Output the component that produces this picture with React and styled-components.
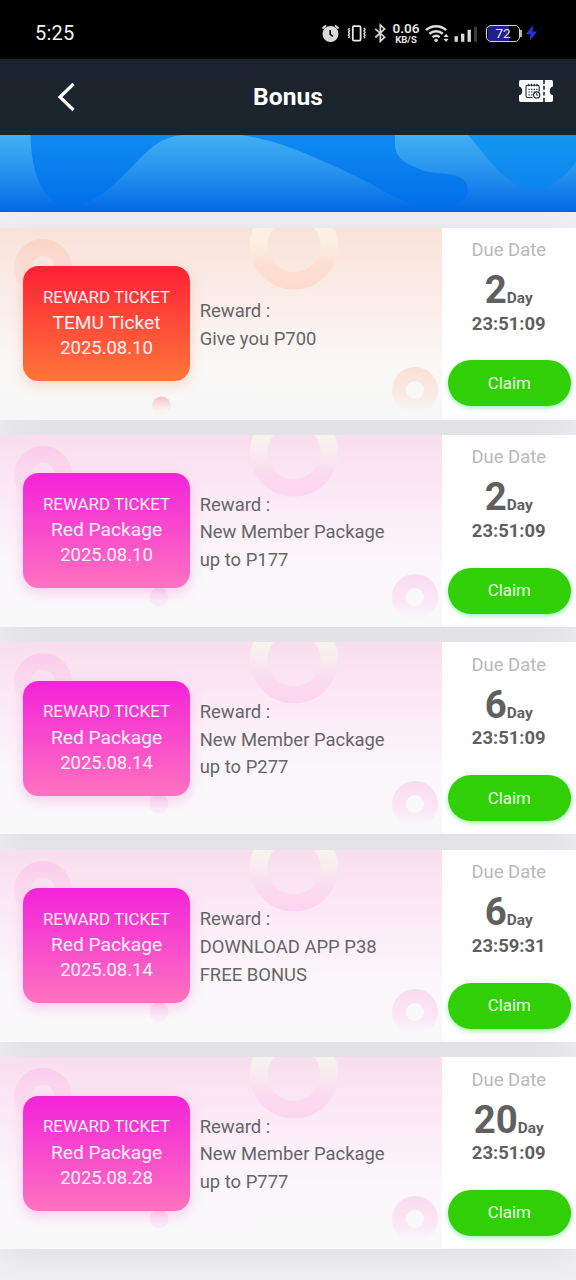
import styled, { createGlobalStyle } from 'styled-components';

const GlobalStyle = createGlobalStyle`
body {
    margin:0;
    background:#f0f0f4;
    font-family:Roboto, "Liberation Sans", sans-serif;
}
`
const Page = styled.div`
    width:576px;
    height:1280px;
    overflow:hidden;
    background:#f0f0f4;
`
const StatusBar = styled.div`
    height:59px;
    box-sizing:border-box;
    padding:7px 39px 0 35px;
    display:flex;
    align-items:center;
    justify-content:space-between;
    background:#000;
    color:#f2f2f2;
`
const Clock = styled.span`
    font-size:20px;
    letter-spacing:0.2px;
`
const StatusIcons = styled.div`
    display:flex;
    align-items:center;
`
const NetSpeed = styled.div`
    width:28px;
    margin:1px 5px 0 6px;
    display:flex;
    flex-direction:column;
    align-items:center;
    font-size:13.5px;
    line-height:13px;
    font-weight:600;
    color:#e6e6e6;
`
const NetUnit = styled.span`
    font-size:9.6px;
    line-height:10px;
    font-weight:700;
`
const Battery = styled.div`
    width:34px;
    height:17px;
    box-sizing:border-box;
    border:1.5px solid #d6d5c8;
    border-radius:5px;
    margin-left:9px;
    display:flex;
    align-items:center;
    justify-content:center;
    background:linear-gradient(90deg, #000 1px, #20208c 1px, #20208c 22px, #000 22px);
    color:#e4e4f4;
    font-size:13.5px;
    line-height:14px;
`
const BatteryTip = styled.div`
    width:2px;
    height:7px;
    background:#b9b8a0;
    margin-right:4px;
`
const Header = styled.div`
    height:76px;
    display:grid;
    grid-template-columns:110px 1fr 110px;
    align-items:center;
    background:linear-gradient(#1a242e, #1c252e 50%, #18242d);
`
const BackButton = styled.button`
    border:0;
    padding:0 0 1px 57px;
    background:none;
    display:flex;
`
const Title = styled.h1`
    margin:0;
    text-align:center;
    font-size:24.6px;
    line-height:30px;
    font-weight:700;
    color:#fff;
`
const HistoryButton = styled.button`
    border:0;
    padding:0 0 12px 53px;
    background:none;
    display:flex;
`
const Banner = styled.div`
    height:77px;
    background:linear-gradient(#42b0f4, #2692ee 48%, #0069e6);
`
const TicketList = styled.div`
    padding-top:15.6px;
    display:flex;
    flex-direction:column;
    gap:15.4px;
`
const Card = styled.div`
    height:192px;
    flex:none;
    display:flex;
    background:#fff;
    box-shadow:0 7px 38px rgba(0, 0, 0, 0.075);
`
const CardMain = styled.div`
    position:relative;
    width:441.5px;
    display:flex;
    align-items:center;
    background:linear-gradient(${props => props.$hot ? '#f8e3d9, #fbeeea 42%, #f9f8f7 70%, #f7f7f7' : '#f9deed, #fceef8 42%, #faf7fa 68%, #f9f9f9'});
`
const Rings = styled.svg`
    position:absolute;
    left:0;
    top:0;
`
const Ticket = styled.div`
    position:relative;
    width:167px;
    height:115px;
    box-sizing:border-box;
    padding-bottom:2px;
    margin-left:23px;
    border-radius:15.4px;
    display:flex;
    flex-direction:column;
    align-items:center;
    justify-content:center;
    color:#fff0f8;
    font-size:18.43px;
    line-height:25.4px;
    background:linear-gradient(${props => props.$hot ? '#ff2035, #ff763a' : '#f223d9, #ff73bf'});
    box-shadow:0 4px 13px ${props => props.$hot ? 'rgba(255, 110, 60, 0.24)' : 'rgba(255, 70, 200, 0.26)'};
`
const TicketLabel = styled.span`
    font-size:16.9px;
`
const TicketName = styled.span`
    font-size:19.2px;
    line-height:25px;
`
const Reward = styled.div`
    position:relative;
    width:200px;
    padding-top:2px;
    margin-left:9.7px;
    font-size:18.43px;
    line-height:27.65px;
    color:#666;
`
const DueColumn = styled.div`
    flex:1;
    padding-top:8.5px;
    display:flex;
    flex-direction:column;
    align-items:center;
    color:#606060;
`
const DueLabel = styled.span`
    font-size:18.43px;
    line-height:27px;
    color:#b9b9b9;
`
const Days = styled.div`
    height:50.5px;
    line-height:54.4px;
    font-size:38.4px;
    font-weight:700;
`
const DayUnit = styled.span`
    font-size:15.4px;
`
const Time = styled.span`
    font-size:18.43px;
    line-height:20px;
    font-weight:700;
`
const ClaimButton = styled.button`
    width:123px;
    height:46px;
    margin:26.8px 0 0 1px;
    padding:0 0 1px;
    border:0;
    border-radius:23px;
    background:#31d006;
    box-shadow:0 2px 5px rgba(20, 220, 70, 0.4);
    color:#e9fbe2;
    font-family:inherit;
    font-size:16.9px;
`

const tickets = [
    { hot: true, name: 'TEMU Ticket', date: '2025.08.10', reward: ['Give you P700'], days: 2, time: '23:51:09' },
    { name: 'Red Package', date: '2025.08.10', reward: ['New Member Package', 'up to P177'], days: 2, time: '23:51:09' },
    { name: 'Red Package', date: '2025.08.14', reward: ['New Member Package', 'up to P277'], days: 6, time: '23:51:09' },
    { name: 'Red Package', date: '2025.08.14', reward: ['DOWNLOAD APP P38', 'FREE BONUS'], days: 6, time: '23:59:31' },
    { name: 'Red Package', date: '2025.08.28', reward: ['New Member Package', 'up to P777'], days: 20, time: '23:51:09' },
]

function StatusGlyphs() {
    return (
        <svg width="70" height="26" viewBox="0 0 70 26" fill="none">
            {/* alarm */}
            <circle cx="14.5" cy="14" r="8" fill="#d9d9d9" />
            <path d="M6.5 8.5 10 5.5M22.5 8.5 19 5.5" stroke="#d9d9d9" strokeWidth="2" />
            <path d="M14.2 10v4.3l2.6 2" stroke="#000" strokeWidth="1.6" />
            {/* vibrate */}
            <rect x="36.8" y="6.2" width="7.8" height="14.5" rx="1.2" stroke="#e8e8e8" strokeWidth="1.8" />
            <path d="M33.5 8l-1 1.4 1 1.4-1 1.5 1 1.4-1 1.5 1 1.4-1 1.5M48 8l1 1.4-1 1.4 1 1.5-1 1.4 1 1.5-1 1.4 1 1.5" stroke="#d0d0d0" strokeWidth="1.5" />
            {/* bluetooth */}
            <path d="M59.3 8.8l9.3 8.4-4.3 4V5l4.3 4-9.3 8.5" stroke="#d6d6d6" strokeWidth="1.7" />
        </svg>
    )
}

function SignalGlyphs() {
    return (
        <svg width="52" height="26" viewBox="0 0 52 26" fill="none">
            <path d="M1 10.2a15 15 0 0 1 20.2 0M4.4 13.7a10.2 10.2 0 0 1 13.4 0M7.6 17.2a5.6 5.6 0 0 1 7 0" stroke="#dcdcdc" strokeWidth="2.5" />
            <circle cx="11.1" cy="20.3" r="1.7" fill="#dcdcdc" />
            <path d="M18.5 17l2.6-3.2 2.6 3.2zM18.5 18.8l2.6 3.2 2.6-3.2z" fill="#dcdcdc" />
            <path d="M31.2 21.7v-5.5M37.7 21.7v-8M44.2 21.7V9.8" stroke="#dcdcdc" strokeWidth="3.3" />
            <path d="M50.5 21.7V6.5" stroke="#3c3c3c" strokeWidth="3" />
        </svg>
    )
}

function TicketIcon() {
    return (
        <svg width="34" height="22" viewBox="0 0 34 22" fill="none">
            <path d="M1.8 0H32.2Q34 0 34 1.8V6.6Q30.8 7.4 30.8 11Q30.8 14.6 34 15.4V20.2Q34 22 32.2 22H1.8Q0 22 0 20.2V15.4Q3.2 14.6 3.2 11Q3.2 7.4 0 6.6V1.8Q0 0 1.8 0Z" fill="#fff" />
            <path d="M25 0v4M25 5.8v4M25 12v3.6M25 17.8v4.2" stroke="#1c252e" strokeWidth="1.6" />
            <path d="M13.5 17.5H8.7Q7 17.5 7 15.8V7Q7 5.3 8.7 5.3H18.5Q20.2 5.3 20.2 7V11.5M9.8 3.8v2.5M12.5 3.8v2.5M15.2 3.8v2.5M17.9 3.8v2.5" stroke="#1c252e" strokeWidth="1.1" />
            <path d="M9.5 9.3h9M9.5 12h7M9.5 14.8h4" stroke="#1c252e" strokeWidth="1.2" strokeDasharray="1.3 1.3" />
            <circle cx="17.7" cy="14.9" r="3.1" fill="#fff" stroke="#1c252e" strokeWidth="1.2" />
            <path d="M17.6 13.2v1.9h1.6" stroke="#1c252e" strokeWidth="0.9" />
        </svg>
    )
}

function BannerWaves() {
    return (
        <svg width="576" height="77" viewBox="0 0 576 77">
            <defs>
                <linearGradient id="wave" x1="0" y1="0" x2="0" y2="77" gradientUnits="userSpaceOnUse">
                    <stop offset="0" stopColor="#0e8bf1" />
                    <stop offset="0.75" stopColor="#0474ea" />
                    <stop offset="1" stopColor="#026be7" />
                </linearGradient>
                <linearGradient id="waveRight" x1="0" y1="0" x2="0" y2="60" gradientUnits="userSpaceOnUse">
                    <stop offset="0" stopColor="#1297f1" />
                    <stop offset="1" stopColor="#0c82ed" />
                </linearGradient>
            </defs>
            <path d="M30.5 0C31 30 39 70 70 71C98 71 122 41 145 18.5C157 7 168 1 184 0Z" fill="url(#wave)" />
            <path d="M241 0C268 4 294 13 320 25C337 32 352 39 367 47C381 54 391 61 404 66C414 70 425 73 437 73C453 73 468 67 468 55C468 45 459 39 442 38.5C432 38 425 37 417 33C402 27 395 21 395 9V0Z" fill="url(#wave)" />
            <path d="M468 0C480 14 491 29 503 40C513 49 522 55 533 55C550 54 565 42 576 27V0Z" fill="url(#waveRight)" />
        </svg>
    )
}

function CardRings({ hot, id }) {
    const tint = hot ? '#fdc9b4' : '#fdbfea'
    return (
        <Rings width="441" height="192" viewBox="0 0 441 192" fill="none">
            <defs>
                <linearGradient id={'big' + id} x1="0" y1="0" x2="0" y2="62" gradientUnits="userSpaceOnUse">
                    <stop offset="0" stopColor={hot ? '#faf1e4' : '#f8f2ef'} />
                    <stop offset="0.25" stopColor={hot ? '#fbeee0' : '#f8ecef'} />
                    <stop offset="0.6" stopColor={hot ? '#fde0d3' : '#fbdcf0'} />
                    <stop offset="1" stopColor={hot ? '#ffdacb' : '#fdd4f1'} />
                </linearGradient>
                <linearGradient id={'left' + id} x1="0" y1="11" x2="0" y2="66" gradientUnits="userSpaceOnUse">
                    <stop offset="0" stopColor={tint} stopOpacity="0.6" />
                    <stop offset="1" stopColor={tint} stopOpacity="0" />
                </linearGradient>
                <linearGradient id={'right' + id} x1="0" y1="139" x2="0" y2="184" gradientUnits="userSpaceOnUse">
                    <stop offset="0" stopColor={tint} stopOpacity="0.5" />
                    <stop offset="0.6" stopColor={tint} stopOpacity="0.3" />
                    <stop offset="1" stopColor={tint} stopOpacity="0" />
                </linearGradient>
                <linearGradient id={'dot' + id} x1="0" y1="0" x2="0" y2="1">
                    <stop offset="0" stopColor={hot ? '#f9a9b5' : '#fdaee3'} stopOpacity={hot ? 0.7 : 0.4} />
                    <stop offset="0.75" stopColor={tint} stopOpacity={hot ? 0.08 : 0.2} />
                </linearGradient>
            </defs>
            <circle cx="294" cy="17.5" r="35.3" stroke={`url(#big${id})`} strokeWidth="17.6" />
            <circle cx="43" cy="40" r="20.5" stroke={`url(#left${id})`} strokeWidth="17" />
            <circle cx="415" cy="162" r="16" stroke={`url(#right${id})`} strokeWidth="14" />
            <circle cx={hot ? 161.5 : 159} cy={hot ? 178 : 162} r="9.5" fill={`url(#dot${id})`} />
        </Rings>
    )
}

function App() {
    return (
        <Page>
            <GlobalStyle />
            <StatusBar>
                <Clock>5:25</Clock>
                <StatusIcons>
                    <StatusGlyphs />
                    <NetSpeed>
                        0.06
                        <NetUnit>KB/S</NetUnit>
                    </NetSpeed>
                    <SignalGlyphs />
                    <Battery>72</Battery>
                    <BatteryTip />
                    <svg width="11" height="16" viewBox="0 0 11 16">
                        <path d="M7 0 0 9.2H4.5L3.8 16 11 6.5H6.5Z" fill="#2a35d8" />
                    </svg>
                </StatusIcons>
            </StatusBar>
            <Header>
                <BackButton>
                    <svg width="18" height="30" viewBox="0 0 18 30" fill="none">
                        <path d="M16.5 2 3 15 16.5 28" stroke="#fff" strokeWidth="3.2" />
                    </svg>
                </BackButton>
                <Title>Bonus</Title>
                <HistoryButton><TicketIcon /></HistoryButton>
            </Header>
            <Banner><BannerWaves /></Banner>
            <TicketList>
                {tickets.map((ticket, i) => (
                    <Card key={i}>
                        <CardMain $hot={ticket.hot}>
                            <CardRings hot={ticket.hot} id={i} />
                            <Ticket $hot={ticket.hot}>
                                <TicketLabel>REWARD TICKET</TicketLabel>
                                <TicketName>{ticket.name}</TicketName>
                                <span>{ticket.date}</span>
                            </Ticket>
                            <Reward>
                                <div>Reward :</div>
                                {ticket.reward.map(line => <div key={line}>{line}</div>)}
                            </Reward>
                        </CardMain>
                        <DueColumn>
                            <DueLabel>Due Date</DueLabel>
                            <Days>{ticket.days}<DayUnit>Day</DayUnit></Days>
                            <Time>{ticket.time}</Time>
                            <ClaimButton>Claim</ClaimButton>
                        </DueColumn>
                    </Card>
                ))}
            </TicketList>
        </Page>
    );
}

export default App;
